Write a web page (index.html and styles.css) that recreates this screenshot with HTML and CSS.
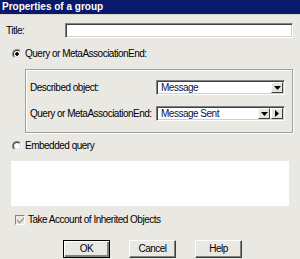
FILE: index.html
```html
<!DOCTYPE html>
<html lang="en">

<head>
    <meta charset="UTF-8">
    <title>Properties of a group</title>
    <link rel="stylesheet" href="styles.css">
</head>

<body>
    <div class="titlebar">Properties of a group</div>

    <div class="dialog">
        <div class="row title-row">
            <span class="title-label">Title:</span>
            <div class="field title-field"></div>
        </div>

        <div class="row radio-row first-radio">
            <span class="radio checked"><span class="radio-in"></span></span>
            <span>Query or MetaAssociationEnd:</span>
        </div>

        <div class="group">
            <div class="row group-row">
                <span class="group-label">Described object:</span>
                <div class="field combo">
                    <span class="combo-text">Message</span>
                    <span class="btn-mini">
                        <svg width="7" height="4" viewBox="0 0 7 4"><path d="M0 0H7L3.5 4Z" fill="#000"/></svg>
                    </span>
                </div>
            </div>
            <div class="row group-row second">
                <span class="group-label">Query or MetaAssociationEnd:</span>
                <div class="field combo">
                    <span class="combo-text">Message Sent</span>
                    <span class="btn-mini">
                        <svg width="7" height="4" viewBox="0 0 7 4"><path d="M0 0H7L3.5 4Z" fill="#000"/></svg>
                    </span>
                    <span class="btn-mini arrow">
                        <svg width="4" height="7" viewBox="0 0 4 7"><path d="M0 0V7L4 3.5Z" fill="#000"/></svg>
                    </span>
                </div>
            </div>
        </div>

        <div class="row radio-row second-radio">
            <span class="radio"><span class="radio-in"></span></span>
            <span>Embedded query</span>
        </div>

        <div class="textarea"></div>

        <div class="row check-row">
            <span class="checkbox">
                <svg width="7" height="7" viewBox="0 0 7 7"><path d="M0 2L2.5 4.5L7 0V2.2L2.5 6.7L0 4.2Z" fill="#a0a0a0"/></svg>
            </span>
            <span>Take Account of Inherited Objects</span>
        </div>

        <div class="buttons">
            <button class="push default">OK</button>
            <button class="push">Cancel</button>
            <button class="push">Help</button>
        </div>
    </div>
</body>

</html>
```

FILE: styles.css
```css
body {
    margin: 0;
    background-color: #eae8e3;
    font-family: "Liberation Sans", Arial, sans-serif;
    font-size: 10px;
    letter-spacing: -0.5px;
    line-height: 12px;
    color: #000;
    overflow: hidden;
    white-space: nowrap;
}

/* 标题栏 */
.titlebar {
    height: 14px;
    line-height: 14px;
    padding-left: 2px;
    background-color: #0a1a6a;
    color: #fff;
    font-weight: bold;
    letter-spacing: 0;
    border-bottom: 1px solid #d8d6d0;
}

.dialog {
    padding: 8px 7px 0 6px;
}

.row {
    display: flex;
    align-items: center;
}

/* 凹陷输入框 */
.field {
    box-sizing: border-box;
    background-color: #fff;
    border: 1px solid;
    border-color: #808080 #fff #fff #808080;
    box-shadow: inset 1px 1px 0 #404040, inset -1px -1px 0 #d4d0c8;
}

.title-label {
    width: 59px;
}

.title-field {
    width: 228px;
    height: 15px;
}

.radio-row span + span {
    margin-left: 3px;
}

.first-radio {
    margin-top: 10px;
    padding-left: 6px;
}

.radio {
    box-sizing: border-box;
    width: 10px;
    height: 10px;
    border-radius: 50%;
    border: 1px solid;
    border-color: #808080 #fff #fff #808080;
    display: flex;
    align-items: center;
    justify-content: center;
}

.radio-in {
    box-sizing: border-box;
    width: 8px;
    height: 8px;
    border-radius: 50%;
    background-color: #fff;
    border: 1px solid;
    border-color: #404040 #d4d0c8 #d4d0c8 #404040;
}

.radio.checked .radio-in {
    background: radial-gradient(circle, #000 0 1.5px, #fff 2px);
}

/* 分组框 */
.group {
    box-sizing: border-box;
    margin: 9px 0 0 19px;
    width: 268px;
    height: 64px;
    border: 1px solid #a0a0a0;
    box-shadow: inset 1px 1px 0 #fff, 1px 1px 0 #fff;
    padding: 10px 7px 0 4px;
}

.group-label {
    width: 126px;
}

.group-row.second {
    margin-top: 11px;
}

.combo {
    width: 129px;
    height: 15px;
    display: flex;
    align-items: stretch;
    padding: 1px;
}

.combo-text {
    flex: 1;
    padding-left: 3px;
    line-height: 11px;
    color: #101040;
}

.btn-mini {
    box-sizing: border-box;
    width: 12px;
    background-color: #e6e4df;
    border: 1px solid;
    border-color: #fff #404040 #404040 #fff;
    display: flex;
    align-items: center;
    justify-content: center;
}

.btn-mini.arrow {
    margin-left: 1px;
}

.second-radio {
    margin-top: 7px;
    padding-left: 6px;
}

.textarea {
    margin: 9px 0 0 5px;
    width: 278px;
    height: 45px;
    background-color: #fff;
}

.check-row {
    margin-top: 8px;
    padding-left: 9px;
}

.checkbox {
    box-sizing: border-box;
    width: 10px;
    height: 10px;
    border: 1px solid;
    border-color: #808080 #fff #fff #808080;
    background-color: #eae8e3;
    display: flex;
    align-items: center;
    justify-content: center;
    margin-right: 3px;
}

/* 按钮 */
.buttons {
    display: flex;
    gap: 19px;
    margin-top: 14px;
    padding-left: 57px;
}

.push {
    box-sizing: border-box;
    width: 47px;
    height: 18px;
    padding: 0;
    font: inherit;
    letter-spacing: inherit;
    background-color: #eae8e3;
    border: 1px solid;
    border-color: #fff #404040 #404040 #fff;
    box-shadow: inset -1px -1px 0 #808080;
}

.push.default {
    border-color: #000;
    box-shadow: inset 1px 1px 0 #fff, inset -2px -2px 0 #808080;
}
```
